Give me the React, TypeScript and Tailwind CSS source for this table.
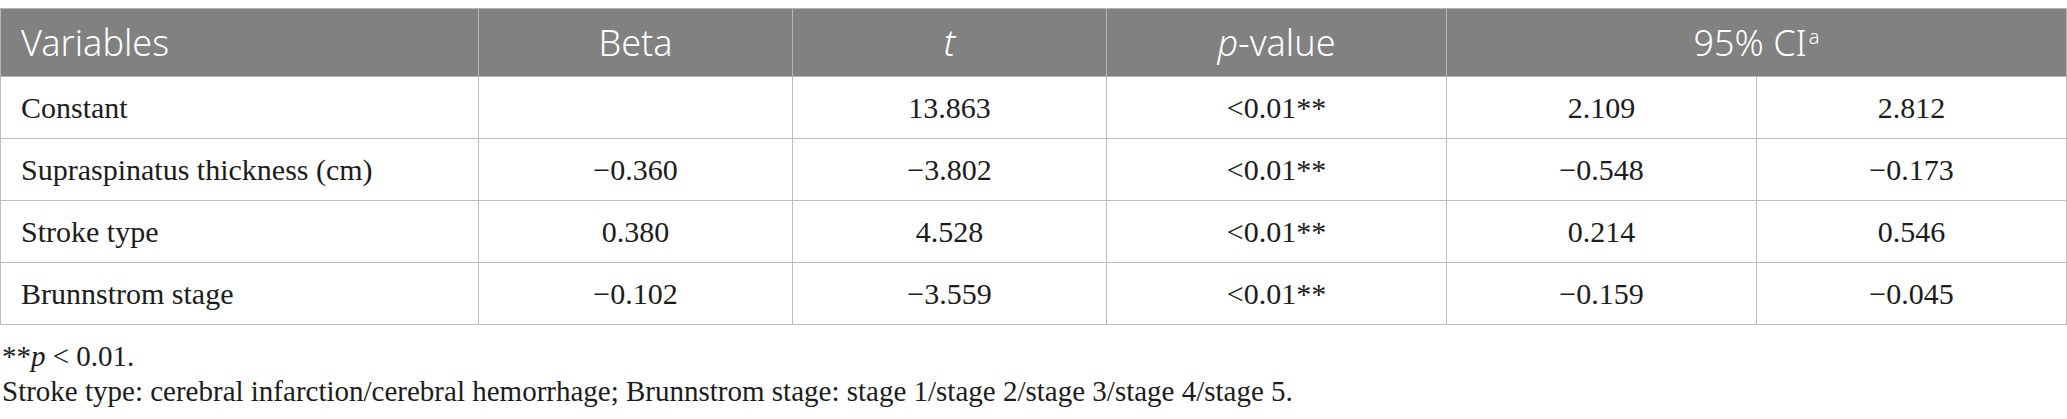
import React from "react";

const MINUS = "\u2212";

type Row = {
  name: string;
  beta: string;
  t: string;
  p: string;
  lo: string;
  hi: string;
};

const rows: Row[] = [
  { name: "Constant", beta: "", t: "13.863", p: "<0.01**", lo: "2.109", hi: "2.812" },
  { name: "Supraspinatus thickness (cm)", beta: `${MINUS}0.360`, t: `${MINUS}3.802`, p: "<0.01**", lo: `${MINUS}0.548`, hi: `${MINUS}0.173` },
  { name: "Stroke type", beta: "0.380", t: "4.528", p: "<0.01**", lo: "0.214", hi: "0.546" },
  { name: "Brunnstrom stage", beta: `${MINUS}0.102`, t: `${MINUS}3.559`, p: "<0.01**", lo: `${MINUS}0.159`, hi: `${MINUS}0.045` },
];

const serif = { fontFamily: '"Liberation Serif", "Times New Roman", serif' };

export default function App() {
  return (
    <div className="w-[2067px] h-[419px] bg-white pt-2 overflow-hidden">
      <table
        className="w-full border-collapse table-fixed text-[#1c1c1c]"
        style={serif}
      >
        <colgroup>
          <col className="w-[478px]" />
          <col className="w-[314px]" />
          <col className="w-[314px]" />
          <col className="w-[340px]" />
          <col className="w-[310px]" />
          <col />
        </colgroup>
        <thead>
          <tr className="h-[68px] bg-[#808180] text-white text-[36px] font-['Noto_Sans',sans-serif]">
            <th className="border border-[#b5b5b5] font-light text-left pl-5">Variables</th>
            <th className="border border-[#b5b5b5] font-light text-center">Beta</th>
            <th className="border border-[#b5b5b5] font-light text-center italic">t</th>
            <th className="border border-[#b5b5b5] font-light text-center">
              <span className="italic">p</span>-value
            </th>
            <th colSpan={2} className="border border-[#b5b5b5] font-light text-center">
              95% CI<span className="text-[20px] relative -top-[12px] ml-[2px]">a</span>
            </th>
          </tr>
        </thead>
        <tbody className="text-[30px]">
          {rows.map((r) => (
            <tr key={r.name} className="h-[62px]">
              <td className="border border-[#bdbdbd] pl-5 text-left">{r.name}</td>
              <td className="border border-[#bdbdbd] text-center">{r.beta}</td>
              <td className="border border-[#bdbdbd] text-center">{r.t}</td>
              <td className="border border-[#bdbdbd] text-center">{r.p}</td>
              <td className="border border-[#bdbdbd] text-center">{r.lo}</td>
              <td className="border border-[#bdbdbd] text-center">{r.hi}</td>
            </tr>
          ))}
        </tbody>
      </table>

      {/* footnotes */}
      <div className="mt-[14px] text-[29px] leading-[35px] text-[#1c1c1c] pl-[2px]" style={serif}>
        <p>
          **<span className="italic">p</span> &lt; 0.01.
        </p>
        <p>
          Stroke type: cerebral infarction/cerebral hemorrhage; Brunnstrom stage: stage 1/stage 2/stage 3/stage 4/stage 5.
        </p>
      </div>
    </div>
  );
}
